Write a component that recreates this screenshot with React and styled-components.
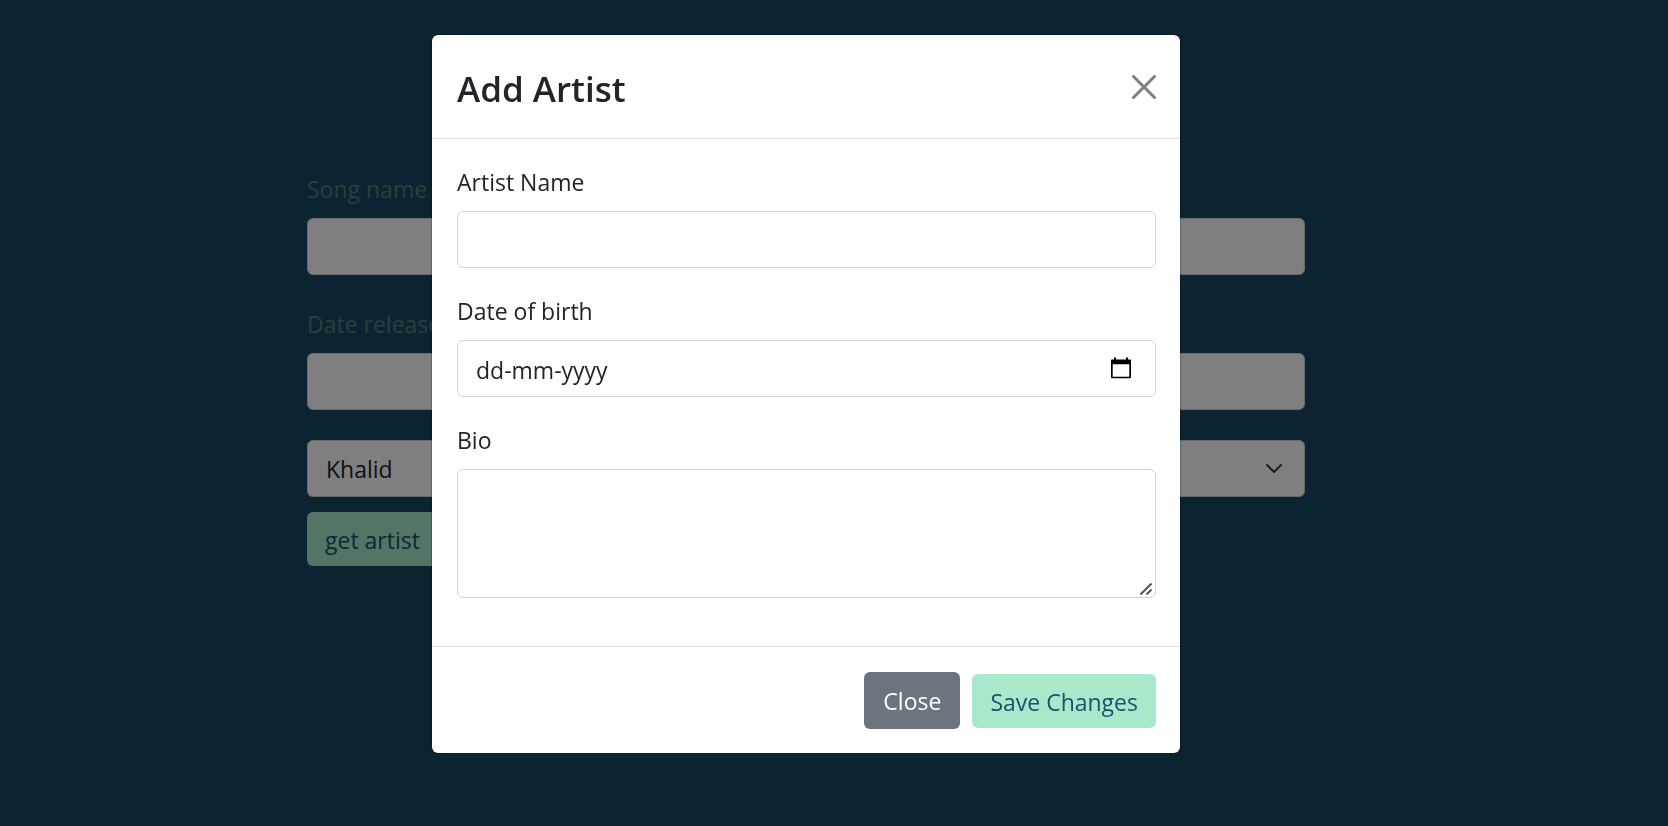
import React from "react";
import styled, { createGlobalStyle } from "styled-components";

const GlobalStyle = createGlobalStyle`
  *, *::before, *::after { box-sizing: border-box; }
  body {
    margin: 0;
    min-height: 100vh;
    background: #184862;
    color: #212529;
    font-family: "Segoe UI", "Open Sans", "Noto Sans", sans-serif;
    font-size: 23px;
    line-height: 38px;
  }
  button, input, select, textarea { font: inherit; color: inherit; }
`;

const Page = styled.main`
  display: flex;
  justify-content: center;
  padding: 170px 56px 0 0;
`;

const SongForm = styled.form`
  display: flex;
  flex-direction: column;
  width: 100%;
  max-width: 998px;
`;

const Field = styled.div`
  display: flex;
  flex-direction: column;
  gap: 10px;
  margin-bottom: ${(p) => p.$space}px;
`;

const Label = styled.label`
  color: ${(p) => (p.$muted ? "#4a8474" : "inherit")};
`;

const controlBox = `
  display: block;
  width: 100%;
  border: 1px solid #ced4da;
  border-radius: 6px;
  background-color: #fff;
  outline: 0;
`;

const Input = styled.input`
  ${controlBox}
  height: 57px;
  padding: 10px 18px 8px;
  &::placeholder { color: #212529; opacity: 1; }
`;

const TextArea = styled.textarea`
  ${controlBox}
  height: 129px;
  padding: 9px 18px;
  resize: none;
`;

const Control = styled.div`
  position: relative;
`;

const PickerButton = styled.button`
  position: absolute;
  top: 17px;
  right: 23px;
  display: flex;
  padding: 0;
  border: 0;
  background: none;
  color: #000;
`;

const ResizeGrip = styled.svg`
  position: absolute;
  right: 4px;
  bottom: 3px;
  pointer-events: none;
`;

const Select = styled.select`
  ${controlBox}
  height: 57px;
  padding: 9px 54px 9px 18px;
  appearance: none;
`;

const SelectArrow = styled.svg`
  position: absolute;
  top: 20px;
  right: 23px;
  pointer-events: none;
`;

const MintButton = styled.button`
  height: 54px;
  padding: 2px 18px 0;
  border: 0;
  border-radius: 6px;
  background: #a8e9cc;
  color: #18536a;
  align-self: ${(p) => p.$align || "auto"};
`;

const GreyButton = styled.button`
  height: 57px;
  padding: 0 19px;
  border: 0;
  border-radius: 6px;
  background: #6c757d;
  color: #fff;
`;

const Backdrop = styled.div`
  position: fixed;
  inset: 0;
  display: flex;
  align-items: flex-start;
  justify-content: center;
  padding: 34px 56px 34px 0;
  overflow: auto;
  background: rgba(0, 0, 0, 0.5);
`;

const Modal = styled.section`
  width: 100%;
  max-width: 750px;
  border: 1px solid rgba(0, 0, 0, 0.2);
  border-radius: 7px;
  background: #fff;
  background-clip: padding-box;
`;

const ModalHeader = styled.header`
  display: flex;
  align-items: center;
  justify-content: space-between;
  padding: 22px 24px 22px 25px;
  border-bottom: 1px solid #dee2e6;
`;

const ModalTitle = styled.h1`
  margin: 0;
  padding-top: 4px;
  font-size: 35px;
  line-height: 55px;
  font-weight: 600;
`;

const CloseButton = styled.button`
  display: flex;
  padding: 0;
  border: 0;
  background: none;
  color: #000;
  opacity: 0.5;
`;

const ModalBody = styled.div`
  padding: 24px 24px 24px 25px;
`;

const ModalFooter = styled.footer`
  display: flex;
  align-items: center;
  justify-content: flex-end;
  gap: 12px;
  padding: 25px 24px 24px;
  border-top: 1px solid #dee2e6;
`;

export default function App() {
  return (
    <>
      <GlobalStyle />
      <Page>
        <SongForm onSubmit={(e) => e.preventDefault()}>
          <Field $space={30}>
            <Label $muted htmlFor="song-name">Song name</Label>
            <Input id="song-name" />
          </Field>
          <Field $space={30}>
            <Label $muted htmlFor="date-released">Date released</Label>
            <Input id="date-released" />
          </Field>
          <Field $space={15}>
            <Control>
              <Select aria-label="Artist" defaultValue="Khalid">
                <option>Khalid</option>
              </Select>
              <SelectArrow width="16" height="16" viewBox="0 0 16 16" fill="none" stroke="#343a40" strokeWidth="2" strokeLinecap="round" strokeLinejoin="round" aria-hidden="true">
                <path d="m1 5 7 7 7-7" />
              </SelectArrow>
            </Control>
          </Field>
          <MintButton $align="flex-start" type="button">get artist</MintButton>
        </SongForm>
      </Page>

      <Backdrop>
        <Modal role="dialog" aria-modal="true" aria-labelledby="modal-title">
          <ModalHeader>
            <ModalTitle id="modal-title">Add Artist</ModalTitle>
            <CloseButton type="button" aria-label="Close">
              <svg width="24" height="24" viewBox="0 0 16 16" fill="currentColor" aria-hidden="true">
                <path d="M.293.293a1 1 0 0 1 1.414 0L8 6.586 14.293.293a1 1 0 1 1 1.414 1.414L9.414 8l6.293 6.293a1 1 0 0 1-1.414 1.414L8 9.414l-6.293 6.293a1 1 0 0 1-1.414-1.414L6.586 8 .293 1.707a1 1 0 0 1 0-1.414z" />
              </svg>
            </CloseButton>
          </ModalHeader>
          <ModalBody>
            <Field $space={24}>
              <Label htmlFor="artist-name">Artist Name</Label>
              <Input id="artist-name" />
            </Field>
            <Field $space={24}>
              <Label htmlFor="birth-date">Date of birth</Label>
              <Control>
                <Input id="birth-date" placeholder="dd-mm-yyyy" />
                <PickerButton type="button" aria-label="Show date picker">
                  <svg width="24" height="24" viewBox="0 0 24 24" fill="currentColor" aria-hidden="true">
                    <path d="M21 2.500h-2V.5h-2v2H7v-2H5v2H3c-.6 0-1 .4-1 1V20c0 .8.500 1.300 1.300 1.300h17.400c.8 0 1.300-.5 1.300-1.300V3.500c0-.6-.4-1-1-1zm-.7 17.300H3.700V7.200h16.600v12.600z" />
                  </svg>
                </PickerButton>
              </Control>
            </Field>
            <Field $space={24}>
              <Label htmlFor="bio">Bio</Label>
              <Control>
                <TextArea id="bio" />
                <ResizeGrip width="12" height="12" viewBox="0 0 12 12" stroke="#555" strokeWidth="2" aria-hidden="true">
                  <path d="M.5 11.5l11-11M6.500 11.500l5-5" />
                </ResizeGrip>
              </Control>
            </Field>
          </ModalBody>
          <ModalFooter>
            <GreyButton type="button">Close</GreyButton>
            <MintButton type="button">Save Changes</MintButton>
          </ModalFooter>
        </Modal>
      </Backdrop>
    </>
  );
}
